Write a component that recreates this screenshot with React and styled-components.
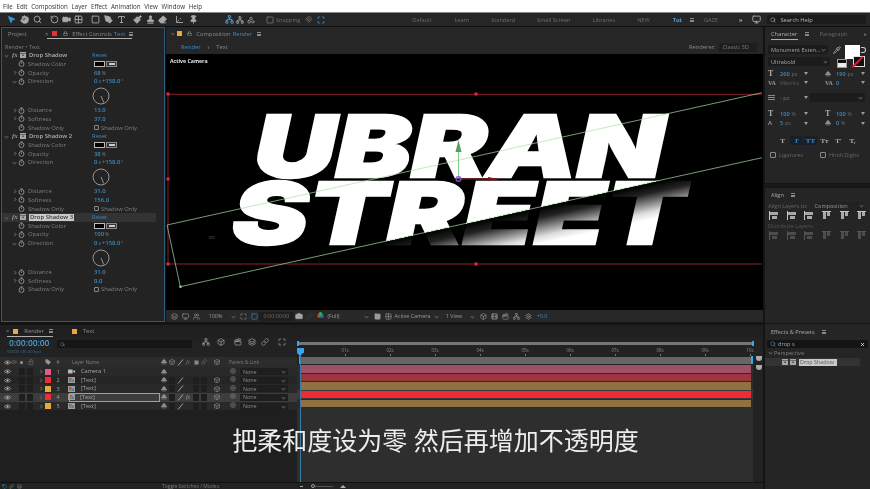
import React from "react";
import styled, { createGlobalStyle } from "styled-components";
import { MousePointer2, Hand, Search, RotateCcw, Video, Grid2x2, Square, PenTool, Type, Paintbrush, Stamp, Eraser, Pin, Axis3d, Magnet, Lock, Camera, Monitor, Users, Box, Link, Tag, Volume2, Pipette, Clapperboard, Film, Layers, Settings, Network, Maximize, Shapes, X } from "lucide-react";

const Global = createGlobalStyle`
  html, body { margin: 0; padding: 0; background: #141414; }
  body { font-family: "Open Sans", "Noto Sans", "Liberation Sans", sans-serif; overflow: hidden; }
  #root { width: 870px; height: 489px; }
`;

const BLUE = "#3b8bc4";
const GREY = "#8b8b8b";

const AppShell = styled.div`
  position: relative; width: 870px; height: 489px; background: #141414; overflow: hidden;
  display: flex; flex-direction: column; filter: blur(0.3px);
`;
const Subtitle = styled.div`
  position: absolute; left: 0; width: 871px; top: 423px; text-align: center;
  font: 400 25px/32px "Noto Sans CJK SC", sans-serif; color: #ededed; word-spacing: 1px;
`;
const MenuBar = styled.div`
  height: 12px; background: #fff; border-bottom: 1px solid #888; display: flex; align-items: center; padding-left: 3px; gap: 3.7px;
  font-size: 6.2px; color: #333;
`;
const ToolBar = styled.div`
  height: 13px; background: #262626; border-bottom: 1px solid #0f0f0f; display: flex; align-items: center; position: relative;
`;
const Tool = styled.div`
  width: 10px; height: 10px; display: flex; align-items: center; justify-content: center; margin-left: ${p => p.$gap ?? 3}px;
  color: ${p => p.$c || "#a8a8a8"}; flex: none;
`;
const WorkLabel = styled.span`
  font-size: 5.6px; color: ${p => p.$c || "#6d6d6d"}; margin-left: ${p => p.$gap}px; flex: none; white-space: nowrap;
`;
const SearchHelp = styled.div`
  width: 99px; height: 9px; margin-left: 6px; background: #1b1b1b; display: flex; align-items: center; color: #b5b5b5; font-size: 5.8px; gap: 4px; padding-left: 3px; box-sizing: border-box;
`;
const Work = styled.div`
  flex: 1; display: flex; min-height: 0;
`;
const LeftColumn = styled.div`
  width: 763px; display: flex; flex-direction: column;
`;
const TopRow = styled.div`
  height: 295px; display: flex; margin-left: 1px; gap: 1px;
`;
const EffectPanel = styled.div`
  width: 164px; box-sizing: border-box; background: #232323; border: 1px solid #2c5c7c; overflow: hidden;
`;
const TabRow = styled.div`
  height: ${p => p.$h || 12}px; display: flex; align-items: center; position: relative; padding-left: ${p => p.$pad || 0}px;
`;
const TabText = styled.span`
  font-size: 5.8px; color: ${p => p.$c || GREY}; margin-left: ${p => p.$gap || 0}px; white-space: nowrap; flex: none;
  font-weight: ${p => p.$w || 400};
`;
const Chip = styled.span`
  width: 5px; height: 5px; flex: none; background: ${p => p.$c}; margin-left: ${p => p.$gap || 0}px;
`;
const MenuGlyph = styled.span`
  width: 4px; height: 4px; flex: none; margin-left: ${p => p.$gap || 0}px;
  border-top: 1px solid #888; border-bottom: 1px solid #888; position: relative; box-sizing: border-box;
  &::after { content: ""; position: absolute; left: 0; right: 0; top: 1px; height: 1px; background: #888; }
`;
const ActiveUnderline = styled.div`
  position: absolute; left: ${p => p.$l}px; width: ${p => p.$w}px; bottom: ${p => p.$b ?? 0}px; height: 1px; background: #b0b0b0;
`;
const Crumb = styled.div`
  padding: 2px 0 0 3px; height: 9px; font-size: 5.6px; color: #7d7d7d; line-height: 7px; box-sizing: border-box;
`;
const FxHeader = styled.div`
  display: grid; grid-template-columns: 3px 5px 10px 9px 63px 1fr; align-items: center; height: 8.67px; font-size: 5.9px;
  background: ${p => p.$sel ? "#333" : "transparent"}; margin-right: 8px;
  color: #b0b0b0; font-weight: 600;
`;
const PropRow = styled.div`
  display: grid; grid-template-columns: 11px 5px 10px 66px 1fr; align-items: center; height: 8.67px; font-size: 5.9px; color: #7f7f7f;
`;
const FxGlyph = styled.span`
  font: italic 600 7px "Liberation Serif", serif; color: #999; padding-left: 2px;
`;
const NameTag = styled.span`
  background: ${p => p.$sel ? "#c9c9c9" : "transparent"}; color: ${p => p.$sel ? "#3a3a3a" : "#b0b0b0"}; padding: ${p => p.$sel ? "0 1px" : 0}; width: max-content; line-height: 7px;
`;
const Val = styled.span`
  color: ${BLUE}; font-weight: 600; white-space: nowrap; display: flex; align-items: center;
  & small { color: #7d7d7d; font-size: 4.8px; font-weight: 400; margin: 0 1px; }
`;
const Swatch = styled.span`
  width: 11px; height: 6px; background: #000; border: 1px solid #bbb; box-sizing: border-box; display: inline-block;
`;
const Dropper = styled.span`
  width: 11px; height: 6px; margin-left: 1px; border: 1px solid #8a8a8a; box-sizing: border-box; display: inline-flex; align-items: center; justify-content: center; background: #333;
  &::after { content: ""; width: 6px; height: 2px; background: #ccc; }
`;
const DialRow = styled.div`
  height: 20.33px; padding-left: 90px; display: flex; align-items: center;
`;
const CheckBox = styled.span`
  width: 5px; height: 5px; border: 1px solid #8a8a8a; box-sizing: border-box; display: inline-block; margin-right: ${p => p.$gap ?? 2}px; flex: none; border-radius: 1px;
`;
const CheckLine = styled.span`
  display: flex; align-items: center; color: #7f7f7f;
`;
const CompPanel = styled.div`
  flex: 1; display: flex; flex-direction: column; background: #262626; min-width: 0;
`;
const RendererBox = styled.span`
  margin-left: 3px; width: 38px; height: 9px; background: #1e1e1e; font-size: 5.6px; color: #7d7d7d; display: flex; align-items: center; padding-left: 4px; box-sizing: border-box; flex: none;
`;
const Canvas = styled.div`
  height: 256px; background: #000; position: relative; flex: none;
`;
const CanvasLabel = styled.span`
  position: absolute; left: 4px; top: 3px; font-size: 5.2px; font-weight: 700; color: #e5e5e5;
`;
const CompBar = styled.div`
  flex: 1; display: flex; align-items: center; background: #282828; padding-left: 3px;
`;
const Slot = styled.div`
  width: ${p => p.$w}px; height: 9px; flex: none; display: flex; align-items: center; justify-content: ${p => p.$left ? "flex-start" : "center"}; color: ${p => p.$c || "#9a9a9a"}; font-size: 5.4px; white-space: nowrap; overflow: visible;
  background: ${p => p.$bg || "transparent"};
`;
const Chevron = styled.span`
  width: 2px; height: 2px; border-right: 1px solid #5e5e5e; border-bottom: 1px solid #5e5e5e; transform: ${p => p.$right ? "rotate(-45deg)" : "rotate(45deg)"}; display: inline-block; flex: none;
`;
const TriDown = styled.span`
  width: 0; height: 0; border-left: 2px solid transparent; border-right: 2px solid transparent; border-top: 3px solid #999; display: inline-block; flex: none;
`;

/* Timeline */
const Timeline = styled.div`
  margin-top: 3px; flex: 1; background: #222; display: flex; flex-direction: column; min-height: 0; position: relative;
`;
const TimelineBody = styled.div`
  flex: 1; display: flex; min-height: 0;
`;
const LayerPane = styled.div`
  width: 297px; flex: none; display: flex; flex-direction: column; background: #222;
`;
const TimeBar = styled.div`
  height: 20px; display: flex; position: relative; flex: none;
`;
const TimeCode = styled.div`
  width: 57px; padding-left: 9px; box-sizing: border-box; flex: none;
  & b { display: block; font: 600 8.4px/11px "Open Sans", sans-serif; color: #46a0dc; }
  & i { display: block; font: 400 4.3px/6px "Open Sans", sans-serif; color: #2f6f9c; margin-left: -2px; white-space: nowrap; }
`;
const LayerSearch = styled.div`
  width: 135px; height: 8px; background: #161616; margin-top: 3px; flex: none; color: #9a9a9a; display: flex; align-items: center; padding-left: 3px; box-sizing: border-box;
`;
const HeadRow = styled.div`
  height: 10px; background: #2c2c2c; flex: none; display: grid; grid-template-columns: 14px 22px 8px 8px 12px 15px 81px 8px 8px 8px 8px 8px 8px 18px 14px 1fr;
  align-items: center; font-size: 4.8px; color: #7f7f7f; justify-items: center;
`;
const LayerRow = styled.div`
  height: 8.67px; flex: none; display: grid; grid-template-columns: 14px 22px 8px 8px 12px 15px 81px 8px 8px 8px 8px 8px 8px 18px 14px 1fr;
  align-items: center; justify-items: center; font-size: 5.6px; color: #9d9d9d;
  background: ${p => p.$sel ? "#3d3d3d" : p.$odd ? "#292929" : "#252525"};
`;
const Boxes = styled.span`
  display: flex; gap: 1px; justify-self: start; margin-left: 5px;
  & i { display: block; width: 6px; height: 7px; background: #1e1e1e; margin-right: 1px; }
`;
const DarkCell = styled.span`
  width: 6px; height: 7px; background: #1e1e1e;
`;
const LayerName = styled.span`
  justify-self: stretch; line-height: 7px; height: 7px; color: #a5a5a5;
  border: ${p => p.$sel ? "1px solid #a0a0a0" : "1px solid transparent"}; margin-left: ${p => p.$sel ? "-10px" : 0}; padding-left: ${p => p.$sel ? "10px" : "1px"}; display: flex; align-items: center;
`;
const NoneSelect = styled.span`
  grid-column: 16; justify-self: stretch; margin-right: 9px; height: 7px; background: #1e1e1e; color: #8c8c8c; display: flex; align-items: center; justify-content: space-between; padding: 0 3px; font-size: 5.4px;
`;
const Fill = styled.div`
  flex: 1; background: ${p => p.$c || "#1f1f1f"};
`;
const StatusBar = styled.div`
  height: 6px; background: #222; flex: none; display: flex; align-items: center; font-size: 5px; color: #7a7a7a; border-top: 1px solid #111;
`;
const TrackPane = styled.div`
  flex: 1; display: flex; flex-direction: column; position: relative; min-width: 0;
`;
const Strip = styled.div`
  position: absolute; right: 0; top: 19px; width: 10px; bottom: 0; background: #222;
`;
const NavBar = styled.div`
  height: 3px; margin: 5px 10px 0 1px; background: #767676; flex: none; position: relative;
`;
const Ruler = styled.div`
  height: 12px; flex: none; display: flex; padding-left: 25.5px; background: #222; font-size: 4.4px; color: #8a8a8a; align-items: center;
`;
const Tick = styled.span`
  width: 45px; text-align: center; flex: none; position: relative; top: -1px;
  &::after { content: ""; position: absolute; left: 50%; bottom: -3px; width: 1px; height: 2px; background: #777; }
`;
const WorkArea = styled.div`
  height: 7px; margin: 0 10px 0 3px; background: #666; flex: none;
`;
const Tracks = styled.div`
  display: flex; flex-direction: column; flex: none; margin-top: 0.5px;
`;
const TrackRow = styled.div`
  height: 8.67px; display: flex; align-items: center; padding: 0 12px 0 3px; background: ${p => p.$sel ? "#3a3a3a" : "#2c2c2c"}; box-sizing: border-box;
`;
const TrackBar = styled.div`
  flex: 1; height: 7.4px; background: ${p => p.$c};
`;
const Playhead = styled.div`
  position: absolute; left: 3px; top: 11px; bottom: 0; width: 1px; background: #3b7ba8;
  &::before { content: ""; position: absolute; left: -3px; top: 0; width: 7px; height: 5px; background: #35a7ee; }
  &::after { content: ""; position: absolute; left: -3px; top: 5px; border-left: 3.5px solid transparent; border-right: 3.5px solid transparent; border-top: 3px solid #35a7ee; }
`;
const NavHandle = styled.span`
  position: absolute; left: ${p => p.$l}px; top: ${p => p.$t}px; width: 2px; height: ${p => p.$h}px; background: #35a7ee;
`;
const FlagMark = styled.span`
  position: absolute; left: 3px; top: ${p => p.$t}px; width: 6px; height: 5px; background: #aaa; border-radius: 0 0 3px 3px;
`;
const SliderTrack = styled.span`
  width: 22px; height: 1px; background: #555; position: relative; margin: 0 7px 0 8px; flex: none;
  &::before { content: ""; position: absolute; left: 0; top: -2px; width: 4px; height: 4px; border: 1px solid #999; border-radius: 50%; box-sizing: border-box; background: #222; }
`;
const SliderMinus = styled.span`
  width: 3px; height: 1px; background: #aaa; flex: none;
`;
const SliderHills = styled.span`
  width: 0; height: 0; border-left: 3px solid transparent; border-right: 3px solid transparent; border-bottom: 3px solid #aaa; flex: none;
`;

/* Right column */
const RightColumn = styled.div`
  width: 105px; margin-left: 2px; display: flex; flex-direction: column; gap: 1px;
`;
const SidePanel = styled.div`
  background: #252525; height: ${p => p.$h ? p.$h + "px" : "auto"}; flex: ${p => p.$h ? "none" : 1}; overflow: hidden; position: relative;
`;
const SideRow = styled.div`
  display: flex; align-items: center; height: ${p => p.$h || 9}px; margin-top: ${p => p.$mt || 0}px; padding-left: ${p => p.$pl || 0}px; font-size: 5.6px; color: #8a8a8a; flex: none;
`;
const DropField = styled.span`
  width: ${p => p.$w}px; height: 9px; background: #1c1c1c; margin-left: ${p => p.$gap || 0}px; padding: 0 3px; box-sizing: border-box; display: flex; align-items: center; justify-content: space-between; color: #a5a5a5; font-size: 5.6px; white-space: nowrap; flex: none;
`;
const BigSwatch = styled.span`
  position: absolute; left: 80px; top: 18px; width: 15px; height: 14px; background: #fff;
`;
const StrokeSwatch = styled.span`
  position: absolute; left: 88px; top: 29px; width: 12px; height: 11px; background: #111; border: 1px solid #ddd; box-sizing: border-box;
  &::after { content: ""; position: absolute; left: -4px; top: 4px; width: 15px; height: 1.5px; background: #d0213a; transform: rotate(-45deg); }
`;
const ArrowSwap = styled.span`
  position: absolute; left: 96px; top: 20px; width: 5px; height: 6px; border: 1px solid #ccc; border-left: 0; border-radius: 0 3px 3px 0; box-sizing: border-box;
`;
const SmallSwatchPair = styled.span`
  position: absolute; left: 72px; top: 32px; width: 10px; height: 9px; background: linear-gradient(#111 50%, #eee 50%); border: 1px solid #999; box-sizing: border-box;
`;
const Metric = styled.span`
  width: ${p => p.$w}px; flex: none; display: flex; align-items: center; justify-content: ${p => p.$c ? "center" : "flex-start"}; color: ${p => p.$col || BLUE}; font-weight: ${p => p.$b || 600}; font-family: ${p => p.$serif ? '"Liberation Serif", serif' : "inherit"}; font-size: ${p => p.$s || 5.6}px;
  & small { color: #6f6f6f; font-size: 5px; font-weight: 400; margin-left: 2px; }
`;
const StyleBtn = styled.span`
  width: 13px; height: 9px; margin-right: 1px; display: flex; align-items: center; justify-content: center; flex: none; font: ${p => p.$i ? "italic " : ""}700 7px "Liberation Serif", serif;
  color: ${p => p.$on ? "#2f8fd0" : "#aaa"}; background: ${p => p.$bg ? "#181f28" : "transparent"};
`;
const BlackBand = styled.div`
  height: 3px; background: #191919;
`;
const PresetRow = styled.div`
  height: 8px; margin: 1px 10px 0 0; background: #333; display: flex; align-items: center; padding-left: 17px; gap: 2px; color: #999;
`;
const PresetName = styled.span`
  background: #c9c9c9; color: #5c5c5c; font-size: 5.4px; width: 38px; height: 7px; line-height: 7px; padding-left: 1px; box-sizing: border-box; margin-left: 1px; white-space: nowrap;
`;
const SearchField = styled.div`
  height: 8px; margin: 3px 2px 0 2px; background: #141414; display: flex; align-items: center; padding: 0 3px; color: #aaa; font-size: 5.6px;
  & em { font-style: normal; margin-left: 2px; flex: 1; color: #a5a5a5; }
`;
const AlignIcon = styled.svg`
  display: block; flex: none; margin-left: ${p => p.$gap}px; opacity: ${p => p.$dim ? 0.3 : 1};
`;

/* small drawings */
const Watch = () => (
  <svg width="7" height="7" viewBox="0 0 7 7"><circle cx="3.5" cy="4" r="2.5" fill="none" stroke="#a2a2a2" strokeWidth=".8" /><path d="M2.5 .7h2M3.5 2.5v1.5" stroke="#a2a2a2" strokeWidth=".7" /></svg>
);
const Dial = () => (
  <svg width="18" height="18" viewBox="0 0 18 18"><circle cx="9" cy="9" r="8" fill="none" stroke="#a0a0a0" strokeWidth=".9" /><path d="M9 9l2.8 6.6" stroke="#a0a0a0" strokeWidth=".9" /></svg>
);
const EyeMini = () => (
  <svg width="7" height="5" viewBox="0 0 7 5"><path d="M.3 2.5C1.5.5 5.5.5 6.7 2.5 5.5 4.5 1.5 4.5.3 2.5z" fill="none" stroke="#bbb" strokeWidth=".7" /><circle cx="3.5" cy="2.5" r="1" fill="#bbb" /></svg>
);
const ShyMini = () => (
  <svg width="6" height="6" viewBox="0 0 6 6"><path d="M3 .5c1 0 1.4.8 1.4 1.6L6 4H0l1.6-1.9C1.6 1.3 2 .5 3 .5zM1 5h4" stroke="#8f8f8f" fill="#8f8f8f" strokeWidth=".5" /></svg>
);
const SlashMini = () => (
  <svg width="7" height="7" viewBox="0 0 7 7"><path d="M1 6.5L6 .5" stroke="#bdbdbd" strokeWidth=".8" /></svg>
);
const CubeMini = () => (
  <svg width="6" height="6" viewBox="0 0 6 6"><path d="M3 .4L5.6 1.8V4.4L3 5.7.4 4.4V1.8zM.4 1.8L3 3.2 5.6 1.8M3 3.2V5.7" fill="none" stroke="#9a9a9a" strokeWidth=".55" /></svg>
);
const SpiralMini = () => (
  <svg width="6" height="6" viewBox="0 0 6 6"><circle cx="3" cy="3" r="2.4" fill="none" stroke="#8c8c8c" strokeWidth=".6" /><circle cx="3" cy="3" r="1" fill="none" stroke="#8c8c8c" strokeWidth=".5" /></svg>
);
const Thumb = ({ cam }) => cam ? (
  <svg width="7" height="5" viewBox="0 0 7 5"><rect x="0" y=".5" width="4.6" height="4" fill="#b8b8b8" /><path d="M4.6 2.5L7 1v3z" fill="#b8b8b8" /></svg>
) : (
  <svg width="7" height="6" viewBox="0 0 7 6"><rect width="7" height="6" fill="#9d9d9d" /><rect x="1" y="1" width="2.5" height="2" fill="#d24545" /><rect x="3.5" y="2.5" width="2.5" height="2.5" fill="#4b7fb5" /><rect x="1" y="3" width="2.5" height="2" fill="#5b9b5b" /></svg>
);
const ClapMini = () => (
  <svg width="6" height="6" viewBox="0 0 6 6"><rect y="1.5" width="6" height="4.5" fill="#a8a8a8" /><rect y="0" width="6" height="1" fill="#a8a8a8" /><path d="M2 3.2h2" stroke="#222" strokeWidth=".8" /></svg>
);
const Align = ({ kind, gap, dim }) => {
  const bars = kind === "h"
    ? <><rect x="1" y="1" width="8" height="3" fill="#a9a9a9" /><rect x="3" y="5" width="5" height="3" fill="#a9a9a9" /><path d="M.5 0v9" stroke="#eee" strokeWidth=".8" /></>
    : <><rect x="1" y="1" width="3" height="7" fill="#a9a9a9" /><rect x="5" y="1" width="3" height="4" fill="#a9a9a9" /><path d="M0 .5h9" stroke="#eee" strokeWidth=".8" /></>;
  return <AlignIcon $gap={gap} $dim={dim} width="9" height="9" viewBox="0 0 9 9">{bars}</AlignIcon>;
};

const ICO = { strokeWidth: 2.4 };

const toolLeft = [
  [<MousePointer2 size={9} fill="#2f9ae8" color="#2f9ae8" />, 6, "#2f9ae8"],
  [<Hand size={9} fill="#aaa" {...ICO} />, 3],
  [<Search size={9} {...ICO} />, 3],
  [<RotateCcw size={9} {...ICO} />, 7],
  [<Video size={9} fill="#aaa" {...ICO} />, 2],
  [<Grid2x2 size={9} {...ICO} />, 2],
  [<Square size={9} {...ICO} />, 7],
  [<PenTool size={9} fill="#aaa" {...ICO} />, 3],
  [<Type size={9} {...ICO} />, 3],
  [<Paintbrush size={9} fill="#aaa" {...ICO} />, 6],
  [<Stamp size={9} fill="#aaa" {...ICO} />, 3],
  [<Eraser size={9} fill="#aaa" {...ICO} />, 2],
  [<Axis3d size={9} {...ICO} />, 7],
  [<Pin size={9} fill="#aaa" {...ICO} />, 4],
];

const Effect = ({ name, selected, opacity, distance, softness }) => (
  <>
    <FxHeader $sel={selected}>
      <span /><Chevron /><FxGlyph>fx</FxGlyph><ClapMini />
      <NameTag $sel={selected}>{name}</NameTag><Val style={{ fontWeight: 400 }}>Reset</Val>
    </FxHeader>
    <PropRow><span /><span /><Watch /><span>Shadow Color</span><span style={{ display: "flex" }}><Swatch /><Dropper /></span></PropRow>
    <PropRow><span /><Chevron $right /><Watch /><span>Opacity</span><Val>{opacity}<small>%</small></Val></PropRow>
    <PropRow><span /><Chevron /><Watch /><span>Direction</span><Val>0<small>x</small>+158.0<small>°</small></Val></PropRow>
    <DialRow><Dial /></DialRow>
    <PropRow><span /><Chevron $right /><Watch /><span>Distance</span><Val>{distance}</Val></PropRow>
    <PropRow><span /><Chevron $right /><Watch /><span>Softness</span><Val>{softness}</Val></PropRow>
    <PropRow><span /><span /><Watch /><span>Shadow Only</span><CheckLine><CheckBox />Shadow Only</CheckLine></PropRow>
  </>
);

const layers = [
  { n: 1, name: "Camera 1", c: "#e8588f", cam: true, bar: "#9e5068" },
  { n: 2, name: "[Text]", c: "#ea2e35", bar: "#9c3540" },
  { n: 3, name: "[Text]", c: "#eaa83c", bar: "#8f7240" },
  { n: 4, name: "[Text]", c: "#ea2e35", sel: true, fx: true, bar: "#ee2a35" },
  { n: 5, name: "[Text]", c: "#eaa83c", bar: "#8f7240" },
];

const artFont = { fontFamily: 'Inter, "Liberation Sans", sans-serif', fontWeight: 900, fontStyle: "italic", fontSize: 85, lengthAdjust: "spacingAndGlyphs", strokeWidth: 2.4 };

const Artwork = () => (
  <svg width="597" height="256" viewBox="166 54 597 256" style={{ display: "block" }}>
    <defs>
      <linearGradient id="fade" gradientUnits="userSpaceOnUse" x1="392.2" y1="203.2" x2="407.8" y2="273.4">
        <stop offset="0" stopColor="#fff" /><stop offset=".5" stopColor="#fff" /><stop offset=".5" stopColor="#000" /><stop offset=".64" stopColor="#222" /><stop offset=".9" stopColor="#ddd" /><stop offset="1" stopColor="#fff" />
      </linearGradient>
    </defs>
    <text x="254" y="176.5" {...artFont} textLength="410" fill="#fff" stroke="#fff">UBRAN</text>
    <text x="232" y="243.5" {...artFont} textLength="452" fill="url(#fade)" stroke="url(#fade)">STREET</text>
    <path d="M168 94.3H762M168 264H762M168 94.3V264" stroke="#8a1f2b" strokeWidth="1" fill="none" />
    {[[168, 94], [168, 179], [168, 264], [476, 94], [476, 264]].map(([x, y]) => <rect key={x + "-" + y} x={x - 1.5} y={y - 1.5} width="3" height="3" fill="#e8283c" />)}
    <path d="M167 225L762 92.7M180.3 286.7L762 157.7M167 225L180.3 286.7" stroke="#a9dfa4" strokeWidth=".7" fill="none" />
    <circle cx="180.5" cy="286.7" r="1.3" fill="#8fe08a" />
    <path d="M458.5 179V150" stroke="#5fc26a" strokeWidth=".8" />
    <path d="M458.5 140L455.5 152H461.5Z" fill="#4fa05c" />
    <path d="M458.5 179H498" stroke="#6b1414" strokeWidth="1.4" />
    <path d="M498.5 179L488 177V181Z" fill="#7c1616" />
    <circle cx="458.5" cy="179" r="2.4" fill="none" stroke="#8a4fd8" strokeWidth="1.2" />
    <path d="M209 237.5a1.2 1.2 0 1 0 2.4 0a1.2 1.2 0 1 0 -2.4 0M212 237.5a1.2 1.2 0 1 0 2.4 0a1.2 1.2 0 1 0 -2.4 0" stroke="#555" strokeWidth=".5" fill="none" />
  </svg>
);

export default function App() {
  return (
    <AppShell>
      <Global />
      <MenuBar>
        {["File", "Edit", "Composition", "Layer", "Effect", "Animation", "View", "Window", "Help"].map(t => <span key={t}>{t}</span>)}
      </MenuBar>
      <ToolBar>
        {toolLeft.map(([ic, gap, c], i) => <Tool key={i} $gap={gap} $c={c}>{ic}</Tool>)}
        <Tool $gap={26} $c="#4ba3e6"><Network size={9} {...ICO} /></Tool>
        <Tool $gap={1}><Network size={8} {...ICO} /></Tool>
        <Tool $gap={1}><Shapes size={8} /></Tool>
        <Tool $gap={9} $c="#888"><Square size={8} /></Tool>
        <WorkLabel $gap={1}>Snapping</WorkLabel>
        <Tool $gap={3} $c="#888"><Magnet size={7} /></Tool>
        <Tool $gap={3} $c="#4ba3e6"><Maximize size={8} /></Tool>
        <WorkLabel $gap={86}>Default</WorkLabel>
        <WorkLabel $gap={23}>Learn</WorkLabel>
        <WorkLabel $gap={22}>Standard</WorkLabel>
        <WorkLabel $gap={22}>Small Screen</WorkLabel>
        <WorkLabel $gap={22}>Libraries</WorkLabel>
        <WorkLabel $gap={22}>NEW</WorkLabel>
        <WorkLabel $gap={23} $c="#4aa2dc" style={{ fontWeight: 700 }}>Tut</WorkLabel>
        <MenuGlyph $gap={8} />
        <WorkLabel $gap={10}>GAZE</WorkLabel>
        <WorkLabel $gap={21} $c="#bbb" style={{ fontWeight: 700 }}>»</WorkLabel>
        <Tool $gap={9} $c="#bbb"><Monitor size={9} /></Tool>
        <SearchHelp><Search size={6} color="#bbb" />Search Help</SearchHelp>
      </ToolBar>
      <Work>
        <LeftColumn>
          <TopRow>
            <EffectPanel>
              <TabRow $h={11} $pad={6}>
                <TabText>Project</TabText>
                <TabText $gap={18}>×</TabText>
                <Chip $c="#ea2e35" $gap={4} />
                <Lock size={5} color="#bbb" style={{ marginLeft: 6 }} />
                <TabText $gap={4}>Effect Controls</TabText>
                <TabText $gap={2} $c={BLUE}>Text</TabText>
                <MenuGlyph $gap={4} />
                <ActiveUnderline $l={45} $w={85} />
              </TabRow>
              <Crumb style={{ marginTop: 3 }}>Render • Text</Crumb>
              <Effect name="Drop Shadow" opacity="68" distance="13.0" softness="37.0" />
              <Effect name="Drop Shadow 2" opacity="38" distance="31.0" softness="156.0" />
              <Effect name="Drop Shadow 3" selected opacity="100" distance="31.0" softness="0.0" />
            </EffectPanel>
            <CompPanel>
              <TabRow $h={13} $pad={5}>
                <TabText>×</TabText>
                <Chip $c="#eaa83c" $gap={3} />
                <Lock size={5} color="#bbb" style={{ marginLeft: 5 }} />
                <TabText $gap={4}>Composition</TabText>
                <TabText $gap={2} $c={BLUE}>Render</TabText>
                <MenuGlyph $gap={5} />
              </TabRow>
              <TabRow $h={14} $pad={15}>
                <TabText $c={BLUE}>Render</TabText>
                <TabText $gap={7} $c="#bbb">‹</TabText>
                <TabText $gap={7}>Text</TabText>
                <TabText $gap={461}>Renderer:</TabText>
                <RendererBox>Classic 3D</RendererBox>
              </TabRow>
              <Canvas>
                <Artwork />
                <CanvasLabel>Active Camera</CanvasLabel>
              </Canvas>
              <CompBar>
                <Slot $w={11}><Layers size={7} /></Slot>
                <Slot $w={11}><Monitor size={7} /></Slot>
                <Slot $w={11}><Users size={7} /></Slot>
                <Slot $w={27}>100%</Slot>
                <Slot $w={8}><Chevron /></Slot>
                <Slot $w={12}><Maximize size={7} /></Slot>
                <Slot $w={10} $c="#3f93cf"><Square size={7} /></Slot>
                <Slot $w={35} $bg="#1e1e1e" $c="#6f6f6f">0:00:00:00</Slot>
                <Slot $w={10}><Camera size={8} fill="#aaa" /></Slot>
                <Slot $w={10} $c="#444"><Link size={7} /></Slot>
                <Slot $w={12}>
                  <svg width="7" height="8" viewBox="0 0 7 8"><circle cx="2.2" cy="4" r="2" fill="#d33" /><circle cx="4.8" cy="4" r="2" fill="#36b" /><circle cx="3.5" cy="2" r="2" fill="#3a3" /></svg>
                </Slot>
                <Slot $w={36} $left>&nbsp;(Full)</Slot>
                <Slot $w={9}><Chevron /></Slot>
                <Slot $w={12}><Square size={7} fill="#999" /></Slot>
                <Slot $w={10}><Grid2x2 size={7} /></Slot>
                <Slot $w={38} $left>&nbsp;Active Camera</Slot>
                <Slot $w={10}><Chevron /></Slot>
                <Slot $w={26}>1 View</Slot>
                <Slot $w={10}><Chevron /></Slot>
                <Slot $w={12}><Box size={7} /></Slot>
                <Slot $w={11}><Film size={7} /></Slot>
                <Slot $w={11}><Clapperboard size={7} /></Slot>
                <Slot $w={11}><Network size={7} /></Slot>
                <Slot $w={13}><Settings size={7} /></Slot>
                <Slot $w={14} $c={BLUE}>+0.0</Slot>
              </CompBar>
            </CompPanel>
          </TopRow>
          <Timeline>
            <TabRow $h={12} $pad={6} style={{ background: "#1f1f1f" }}>
              <TabText>×</TabText>
              <Chip $c="#eaa83c" $gap={4} />
              <TabText $gap={6}>Render</TabText>
              <MenuGlyph $gap={5} />
              <Chip $c="#eaa83c" $gap={19} />
              <TabText $gap={6}>Text</TabText>
              <ActiveUnderline $l={7} $w={46} />
            </TabRow>
            <TimelineBody>
              <LayerPane>
                <TimeBar>
                  <TimeCode><b>0:00:00:00</b><i>00000 (30.00 fps)</i></TimeCode>
                  <LayerSearch><Search size={5} /></LayerSearch>
                  <Tool $gap={9}><Network size={8} /></Tool>
                  <Tool $gap={5}><Box size={8} /></Tool>
                  <Tool $gap={7}><Clapperboard size={8} /></Tool>
                  <Tool $gap={4}><Layers size={8} /></Tool>
                  <Tool $gap={3}><Link size={8} /></Tool>
                  <Tool $gap={7}><Maximize size={8} /></Tool>
                </TimeBar>
                <HeadRow>
                  <EyeMini />
                  <span style={{ display: "flex", gap: 3, alignItems: "center", justifySelf: "start", marginLeft: -3 }}>
                    <Volume2 size={6} /><span style={{ width: 3, height: 3, borderRadius: 2, background: "#999" }} /><Lock size={6} style={{ marginLeft: 2 }} />
                  </span>
                  <span /><Tag size={6} fill="#999" /><span>#</span><span />
                  <span style={{ justifySelf: "start", marginLeft: -7 }}>Layer Name</span>
                  <ShyMini /><CubeMini /><SlashMini /><span style={{ fontStyle: "italic" }}>fx</span><Square size={5} fill="#888" /><Link size={6} /><CubeMini />
                  <span style={{ justifySelf: "start", marginLeft: 3, whiteSpace: "nowrap" }}>Parent &amp; Link</span>
                </HeadRow>
                {layers.map((l, i) => (
                  <LayerRow key={l.n} $sel={l.sel} $odd={i % 2 === 0}>
                    <EyeMini />
                    <Boxes><i /><i /></Boxes>
                    <Chevron $right />
                    <Chip $c={l.c} style={{ width: 6, height: 6 }} />
                    <span>{l.n}</span>
                    <Thumb cam={l.cam} />
                    <LayerName $sel={l.sel}>{l.name}</LayerName>
                    <ShyMini />
                    {!l.cam && <DarkCell />}
                    {!l.cam && <SlashMini />}
                    {!l.cam && (l.fx ? <span style={{ fontStyle: "italic", fontFamily: '"Liberation Serif", serif' }}>fx</span> : <span />)}
                    {!l.cam && <DarkCell />}
                    {!l.cam && <DarkCell />}
                    {!l.cam && <CubeMini />}
                    <span style={{ gridColumn: 15 }}><SpiralMini /></span>
                    <NoneSelect>None<Chevron /></NoneSelect>
                  </LayerRow>
                ))}
                <Fill />
              </LayerPane>
              <TrackPane>
                <NavBar>
                  <NavHandle $l={-1} $t={-1} $h={5} />
                  <NavHandle $l={454} $t={-1} $h={5} />
                </NavBar>
                <Ruler>
                  {["01s", "02s", "03s", "04s", "05s", "06s", "07s", "08s", "09s", "10s"].map(t => <Tick key={t}>{t}</Tick>)}
                </Ruler>
                <WorkArea />
                <Tracks>
                  {layers.map(l => <TrackRow key={l.n} $sel={l.sel}><TrackBar $c={l.bar} /></TrackRow>)}
                </Tracks>
                <Fill $c="#2e2e2e" />
                <Strip>
                  <FlagMark $t={0} />
                  <FlagMark $t={9} />
                </Strip>
                <NavHandle $l={2} $t={19} $h={8} />
                <NavHandle $l={454} $t={19} $h={8} />
                <Playhead />
              </TrackPane>
            </TimelineBody>
            <StatusBar>
              <Slot $w={8} $c="#4aa2dc"><Tag size={5} /></Slot>
              <Slot $w={7}><Link size={5} /></Slot>
              <Slot $w={8}><Layers size={5} /></Slot>
              <Slot $w={139} />
              <span style={{ width: 62, flex: "none", whiteSpace: "nowrap" }}>Toggle Switches / Modes</span>
              <Slot $w={76} />
              <SliderMinus /><SliderTrack /><SliderHills />
            </StatusBar>
          </Timeline>
        </LeftColumn>
        <RightColumn>
          <SidePanel $h={156}>
            <TabRow $h={13} $pad={6}>
              <TabText $c="#b0b0b0">Character</TabText>
              <MenuGlyph $gap={7} />
              <TabText $gap={11} $c="#666">Paragraph</TabText>
              <TabText $gap={16} $c="#aaa">»</TabText>
              <ActiveUnderline $l={6} $w={27} $b={0} />
            </TabRow>
            <SideRow $h={9} $mt={5} $pl={3}>
              <DropField $w={60}>Monument Exten...<Chevron /></DropField>
              <Pipette size={8} color="#bbb" style={{ marginLeft: 5 }} />
            </SideRow>
            <SideRow $h={9} $mt={3} $pl={3}>
              <DropField $w={62}>Ultrabold<Chevron /></DropField>
            </SideRow>
            <BigSwatch /><StrokeSwatch /><ArrowSwap /><SmallSwatchPair />
            <SideRow $mt={3} $pl={3}>
              <Metric $w={12} $serif $col="#aaa" $s={8}>T</Metric>
              <Metric $w={24}>260<small>px</small></Metric><Metric $w={21}><TriDown /></Metric>
              <Metric $w={11}><ShyMini /></Metric>
              <Metric $w={25}>199<small>px</small></Metric><TriDown />
            </SideRow>
            <SideRow $pl={3}>
              <Metric $w={12} $serif $col="#999" $s={6}>VA</Metric>
              <Metric $w={24} $col="#5d5d5d" $b={400}>Metrics</Metric><Metric $w={21}><TriDown /></Metric>
              <Metric $w={11} $serif $col="#999" $s={6}>VA</Metric>
              <Metric $w={25}>0</Metric><TriDown />
            </SideRow>
            <SideRow $mt={6} $pl={3}>
              <Metric $w={12}><MenuGlyph style={{ width: 7, height: 5 }} /></Metric>
              <Metric $w={24} $col="#777" $b={400}>- px</Metric><Metric $w={6}><TriDown /></Metric>
              <DropField $w={55} style={{ justifyContent: "flex-end" }}><Chevron /></DropField>
            </SideRow>
            <SideRow $mt={7} $pl={3}>
              <Metric $w={12} $serif $col="#aaa" $s={8}>T</Metric>
              <Metric $w={24}>100<small>%</small></Metric><Metric $w={21}><TriDown /></Metric>
              <Metric $w={11} $serif $col="#aaa" $s={8}>T</Metric>
              <Metric $w={25}>100<small>%</small></Metric><TriDown />
            </SideRow>
            <SideRow $h={10} $pl={3}>
              <Metric $w={12} $col="#999" $s={6}>A</Metric>
              <Metric $w={24}>5<small>px</small></Metric><Metric $w={21}><TriDown /></Metric>
              <Metric $w={11}><ShyMini /></Metric>
              <Metric $w={25}>0<small>%</small></Metric><TriDown />
            </SideRow>
            <SideRow $mt={8} $pl={11}>
              <StyleBtn>T</StyleBtn><StyleBtn $i $on $bg>T</StyleBtn><StyleBtn $on $bg>TT</StyleBtn><StyleBtn>Tт</StyleBtn><StyleBtn>T'</StyleBtn><StyleBtn>T,</StyleBtn>
            </SideRow>
            <SideRow $mt={5} $pl={5}>
              <CheckBox $gap={3} style={{ width: 6, height: 6 }} /><span style={{ color: "#666", width: 41 }}>Ligatures</span>
              <CheckBox $gap={3} style={{ width: 6, height: 6 }} /><span style={{ color: "#666" }}>Hindi Digits</span>
            </SideRow>
          </SidePanel>
          <BlackBand />
          <SidePanel $h={135}>
            <SideRow $h={9} $mt={2} $pl={6} style={{ color: "#aaa" }}>Align<MenuGlyph $gap={7} /></SideRow>
            <SideRow $h={9} $mt={2} $pl={3} style={{ color: "#666" }}>
              Align Layers to:<span style={{ marginLeft: 7, width: 48, color: "#999", display: "flex", alignItems: "center", justifyContent: "space-between", background: "#222", paddingRight: 2 }}>Composition<Chevron /></span>
            </SideRow>
            <SideRow $h={11}>
              <Align kind="h" gap={4} /><Align kind="h" gap={9} /><Align kind="h" gap={8} /><Align kind="v" gap={9} /><Align kind="v" gap={9} /><Align kind="v" gap={8} />
            </SideRow>
            <SideRow $h={9} $pl={3} style={{ color: "#555" }}>Distribute Layers:</SideRow>
            <SideRow $h={10}>
              <Align kind="h" gap={4} dim /><Align kind="h" gap={9} dim /><Align kind="h" gap={8} dim /><Align kind="v" gap={9} dim /><Align kind="v" gap={9} dim /><Align kind="v" gap={8} dim />
            </SideRow>
          </SidePanel>
          <SidePanel>
            <SideRow $h={10} $mt={3} $pl={6} style={{ color: "#aaa" }}>Effects &amp; Presets<MenuGlyph $gap={7} /></SideRow>
            <SearchField>
              <Search size={6} color="#4aa2dc" /><em>drop s</em><X size={5} color="#ddd" strokeWidth={4} />
            </SearchField>
            <SideRow $h={9} $pl={4} style={{ color: "#808080" }}><Chevron /><span style={{ marginLeft: 2 }}>Perspective</span></SideRow>
            <PresetRow><ClapMini /><ClapMini /><PresetName>Drop Shadow</PresetName></PresetRow>
          </SidePanel>
        </RightColumn>
      </Work>
      <Subtitle>把柔和度设为零 然后再增加不透明度</Subtitle>
    </AppShell>
  );
}
